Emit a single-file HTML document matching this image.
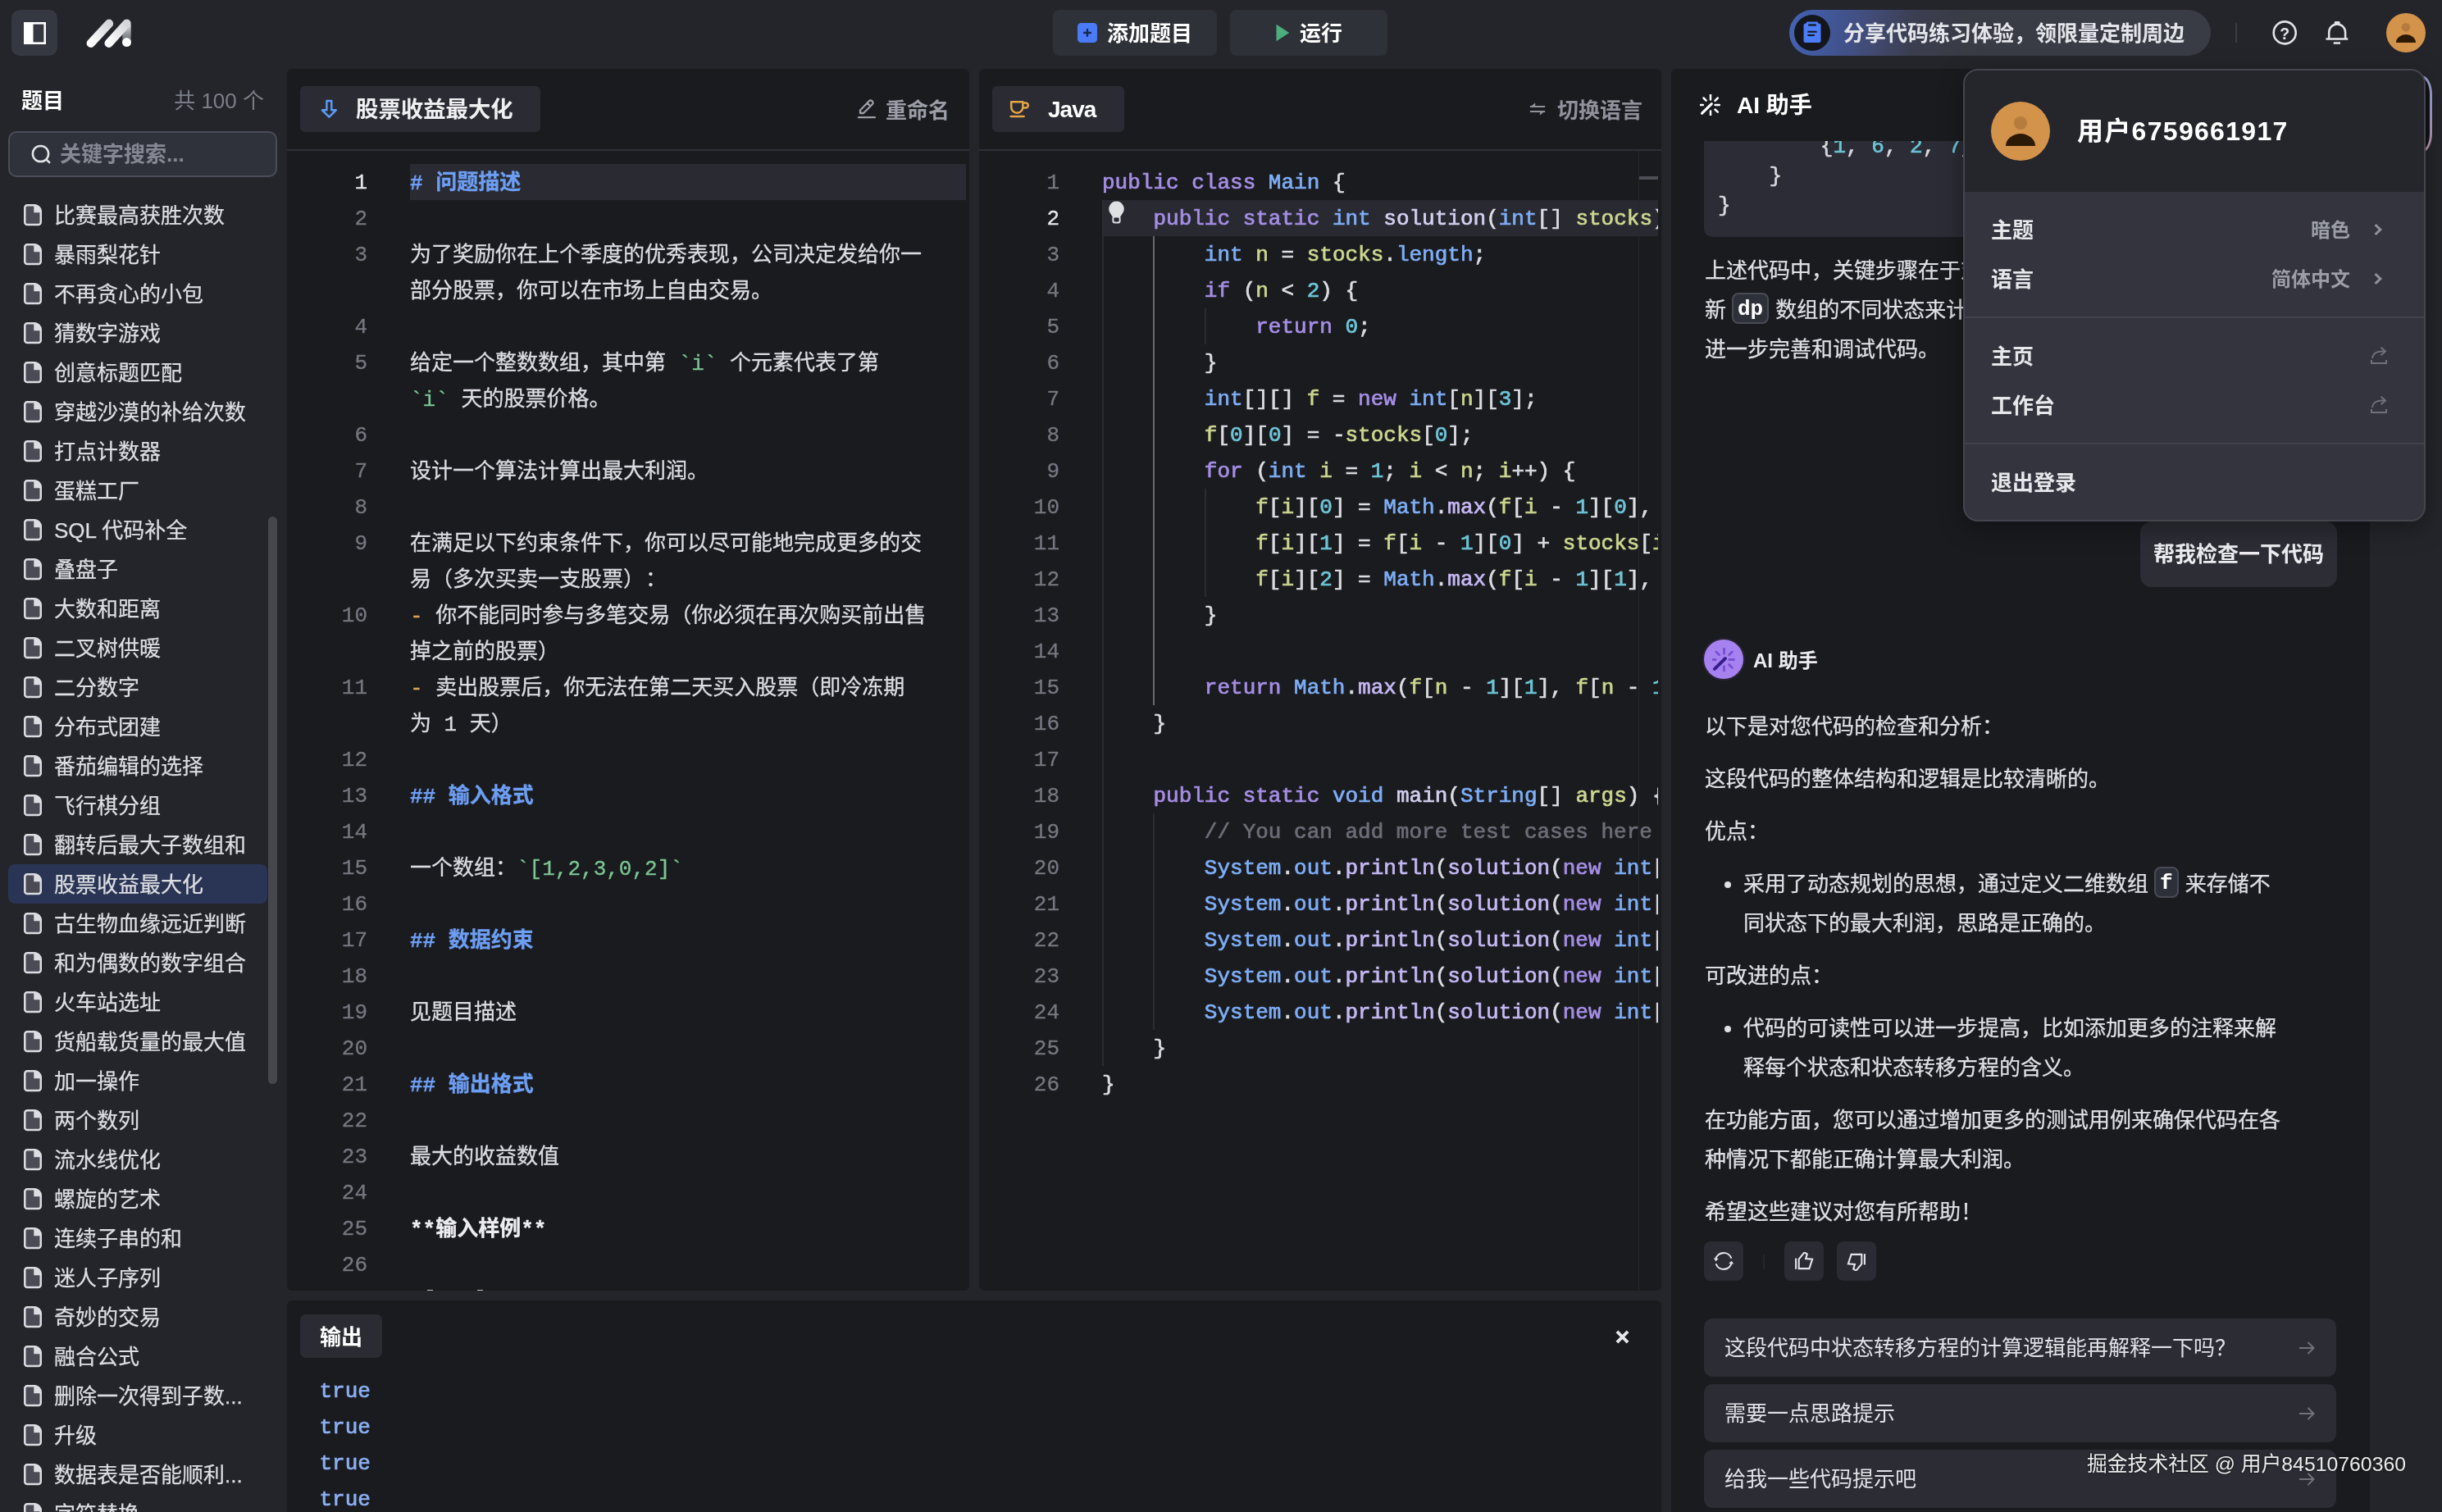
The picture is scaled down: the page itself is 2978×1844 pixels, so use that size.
<!DOCTYPE html>
<html lang="zh-CN"><head><meta charset="utf-8"><title>MarsCode</title>
<style>
*{box-sizing:border-box;margin:0;padding:0}
#app{position:absolute;left:0;top:0;width:2978px;height:1844px;overflow:hidden;will-change:transform}
html,body{width:2978px;height:1844px;overflow:hidden;background:#24252a}
body{position:relative;font-family:"Liberation Sans","Noto Sans CJK SC",sans-serif;font-size:26px;color:#e3e4e9;-webkit-font-smoothing:antialiased}
.abs{position:absolute}
.mono{font-family:"Liberation Mono","Noto Sans CJK SC",monospace}
.b{font-weight:700}
.panel{position:absolute;background:#1a1b1f;border-radius:6px;overflow:hidden}
.tbtn{position:absolute;top:12px;height:56px;border-radius:8px;background:#2f3139}
.tab{position:absolute;top:21px;height:56px;border-radius:6px;background:#2b2c33}
.hline{position:absolute;left:0;right:0;top:98px;height:2px;background:#2f3038}
/* sidebar */
.li{position:absolute;left:10px;width:316px;height:48px;border-radius:8px}
.li svg{position:absolute;left:19px;top:11px}
.li span{position:absolute;left:56px;top:1px;line-height:48px;white-space:nowrap;color:#dddee3;font-size:26px;-webkit-text-stroke:0.25px}
.li.sel{background:#2a3555}
/* editor */
.ln{position:absolute;width:60px;text-align:right;height:44px;line-height:46px;-webkit-text-stroke:0.3px;color:#767881;font-size:26px;font-family:"Liberation Mono",monospace}
.ln.act{color:#e8e8ec}
.row{position:absolute;height:44px;line-height:46px;-webkit-text-stroke:0.3px;white-space:pre;font-size:26px;color:#dcdde2;font-family:"Liberation Mono","Noto Sans CJK SC",monospace}
.h{color:#6d9ef3;font-weight:700}
.g{color:#7cc792}
.o{color:#d9a45c}
.k{color:#a68ee6}
.t{color:#7eaef6}
.v{color:#cdd68f}
.n{color:#6ec6d8}
.f{color:#c6b8f4}
.fd{color:#d4cff0}
.p{color:#dcdde2}
.c{color:#6b6d77}
.row.p{-webkit-text-stroke:0.7px}
.guide{position:absolute;width:2px;background:#2b2c33}
.guide.a{background:#67686e}
/* ai */
.aip{position:absolute;left:41px;width:740px;line-height:48px;font-size:26px;color:#dfe0e5;white-space:nowrap;-webkit-text-stroke:0.25px}
.ic{font-family:"Liberation Mono",monospace;-webkit-text-stroke:0;display:inline-block;height:38px;line-height:37px;padding:0 5px;border:2px solid #484a55;border-radius:8px;background:#2e3039;color:#fff;font-weight:700;vertical-align:middle;position:relative;top:-4px;margin:0 8px 0 7px}
.sug{position:absolute;left:40px;width:771px;height:71px;border-radius:10px;background:#2b2c34;line-height:73px;padding-left:25px;font-size:26px;color:#e1e2e7}
.sug svg{position:absolute;right:26px;top:27px}
.abtn{position:absolute;top:1430px;width:48px;height:48px;border-radius:8px;background:#2a2b33}
/* menu */
.mi{position:absolute;left:32px;font-weight:700;font-size:26px;color:#e6e7eb;line-height:40px;white-space:nowrap}
.mv{position:absolute;right:90px;font-weight:700;font-size:24px;color:#9b9da7;line-height:40px;white-space:nowrap}
</style></head>
<body>
<div id="app">

<!-- ===== top bar ===== -->
<div class="abs" style="left:14px;top:12px;width:56px;height:56px;border-radius:10px;background:#363841">
  <svg class="abs" style="left:14.5px;top:14.5px" width="27" height="27" viewBox="0 0 27 27"><rect x="1.3" y="1.3" width="24.4" height="24.4" fill="none" stroke="#fff" stroke-width="2.6"/><rect x="0.2" y="0.2" width="11.3" height="26.6" fill="#fff"/></svg>
</div>
<svg class="abs" style="left:100px;top:18px" width="66" height="44" viewBox="100 18 66 44">
  <defs><linearGradient id="lg1" x1="0" y1="0" x2="0" y2="1"><stop offset="0" stop-color="#d9dade"/><stop offset="0.35" stop-color="#a9abb1"/><stop offset="1" stop-color="#5d5f66"/></linearGradient>
  <linearGradient id="lg2" x1="1" y1="0" x2="0" y2="1"><stop offset="0" stop-color="#d4d5d9"/><stop offset="1" stop-color="#ffffff"/></linearGradient></defs>
  <path d="M149.3 34 L159.7 30 L159.7 51.5 L149.3 51.5 Z" fill="url(#lg1)"/>
  <line x1="110.8" y1="52.7" x2="133" y2="28.7" stroke="url(#lg2)" stroke-width="10.4" stroke-linecap="round"/>
  <line x1="132.7" y1="52.7" x2="154.5" y2="28.7" stroke="url(#lg2)" stroke-width="10.4" stroke-linecap="round"/>
  <circle cx="154.5" cy="51.6" r="5.5" fill="#fff"/>
</svg>

<div class="tbtn" style="left:1284px;width:200px">
  <svg class="abs" style="left:30px;top:16px" width="24" height="24" viewBox="0 0 24 24"><rect width="24" height="24" rx="4.5" fill="#4a7bf6"/><path d="M12 8v8M8 12h8" stroke="#1a2850" stroke-width="2.3" stroke-linecap="round"/></svg>
  <span class="abs b" style="left:66px;top:1px;line-height:56px;color:#fff;white-space:nowrap">添加题目</span>
</div>
<div class="tbtn" style="left:1500px;width:192px">
  <svg class="abs" style="left:56px;top:17px" width="17" height="22" viewBox="0 0 17 22"><path d="M0.5 0.8 L16.2 11 L0.5 21.2 Z" fill="#4bae7f"/></svg>
  <span class="abs b" style="left:85px;top:1px;line-height:56px;color:#fff;white-space:nowrap">运行</span>
</div>

<div class="abs" style="left:2182px;top:12px;width:514px;height:56px;border-radius:28px;background:linear-gradient(100deg,#4363b4 0%,#41589c 9%,#424c78 19%,#3b3e4f 30%,#393b45 42%,#393b45 100%)">
  <div class="abs" style="left:6px;top:6px;width:44px;height:44px;border-radius:22px;background:#15161b"></div>
  <svg class="abs" style="left:17px;top:14px" width="22" height="27" viewBox="0 0 22 27"><path d="M3 2.6h0.6l1-2h12.800l1 2H19a2.500 2.500 0 0 1 2.500 2.500V23.500a2.500 2.500 0 0 1-2.500 2.500H3a2.500 2.500 0 0 1-2.500-2.500V5.100A2.500 2.500 0 0 1 3 2.600z" fill="#4b7df8"/><path d="M6.200 4.500h9.600" stroke="#15161b" stroke-width="2.200"/><path d="M5.400 12.700h11.200M5.400 17.100h8.400" stroke="#15161b" stroke-width="2"/></svg>
  <span class="abs" style="left:66px;top:1px;line-height:56px;color:#e4e5ea;white-space:nowrap;font-weight:700">分享代码练习体验，领限量定制周边</span>
</div>
<div class="abs" style="left:2726px;top:28px;width:2px;height:24px;background:#3a3b44"></div>
<svg class="abs" style="left:2770px;top:24px" width="32" height="32" viewBox="0 0 32 32"><circle cx="16.2" cy="15.9" r="13.5" fill="none" stroke="#e2e3e8" stroke-width="2.6"/><text x="16.2" y="23.6" text-anchor="middle" font-family="Liberation Sans, sans-serif" font-weight="700" font-size="19.5" fill="#e2e3e8">?</text></svg>
<svg class="abs" style="left:2834px;top:22px" width="32" height="36" viewBox="0 0 32 36"><path d="M6.200 25.600V17.500a9.950 9.950 0 0 1 19.900 0V25.600" fill="none" stroke="#e2e3e8" stroke-width="2.500"/><path d="M2.500 25.600H29.300M11.700 30.400H20" stroke="#e2e3e8" stroke-width="2.500"/><rect x="12.600" y="3.900" width="7.100" height="3.600" rx="1.500" fill="#e2e3e8"/></svg>
<svg class="abs" style="left:2910px;top:16px" width="48" height="48" viewBox="0 0 72 72"><circle cx="36" cy="36" r="36" fill="#d3934b"/><circle cx="36" cy="26" r="8" fill="#b67c3e"/><path d="M18 54 a18 15 0 0 1 36 0 Z" fill="#2c1a06"/></svg>
<!-- ===== sidebar ===== -->
<div class="abs b" style="left:26px;top:103px;line-height:40px;color:#fff;font-size:26px">题目</div>
<div class="abs" style="right:2656px;top:103px;line-height:40px;color:#7b7e89;font-size:26px;white-space:nowrap">共 100 个</div>
<div class="abs" style="left:10px;top:160px;width:328px;height:56px;border:2px solid #4a4d58;border-radius:10px;background:#30323b"><svg class="abs" style="left:25px;top:13px" width="28" height="28" viewBox="0 0 28 28"><circle cx="12.5" cy="12.5" r="9.6" fill="none" stroke="#e4e5ea" stroke-width="2.5"/><path d="M19.6 19.6l3.6 3.6" stroke="#e4e5ea" stroke-width="2.5" stroke-linecap="round"/></svg><span class="abs" style="left:61px;top:0;line-height:52px;color:#858893;font-weight:700;white-space:nowrap">关键字搜索...</span></div>
<div class="li" style="top:238px"><svg width="22" height="27" viewBox="0 0 22 27"><path d="M4.250 1.250H13A7.750 7.750 0 0 1 20.750 9V22a3 3 0 0 1-3 3H4.250a3 3 0 0 1-3-3V4.250a3 3 0 0 1 3-3z" fill="#4a4b55" stroke="#dcdde2" stroke-width="2.500"/><path d="M12.300 0.600H13A8.400 8.400 0 0 1 21.400 9V10.300H12.300z" fill="#dcdde2"/></svg><span>比赛最高获胜次数</span></div>
<div class="li" style="top:286px"><svg width="22" height="27" viewBox="0 0 22 27"><path d="M4.250 1.250H13A7.750 7.750 0 0 1 20.750 9V22a3 3 0 0 1-3 3H4.250a3 3 0 0 1-3-3V4.250a3 3 0 0 1 3-3z" fill="#4a4b55" stroke="#dcdde2" stroke-width="2.500"/><path d="M12.300 0.600H13A8.400 8.400 0 0 1 21.400 9V10.300H12.300z" fill="#dcdde2"/></svg><span>暴雨梨花针</span></div>
<div class="li" style="top:334px"><svg width="22" height="27" viewBox="0 0 22 27"><path d="M4.250 1.250H13A7.750 7.750 0 0 1 20.750 9V22a3 3 0 0 1-3 3H4.250a3 3 0 0 1-3-3V4.250a3 3 0 0 1 3-3z" fill="#4a4b55" stroke="#dcdde2" stroke-width="2.500"/><path d="M12.300 0.600H13A8.400 8.400 0 0 1 21.400 9V10.300H12.300z" fill="#dcdde2"/></svg><span>不再贪心的小包</span></div>
<div class="li" style="top:382px"><svg width="22" height="27" viewBox="0 0 22 27"><path d="M4.250 1.250H13A7.750 7.750 0 0 1 20.750 9V22a3 3 0 0 1-3 3H4.250a3 3 0 0 1-3-3V4.250a3 3 0 0 1 3-3z" fill="#4a4b55" stroke="#dcdde2" stroke-width="2.500"/><path d="M12.300 0.600H13A8.400 8.400 0 0 1 21.400 9V10.300H12.300z" fill="#dcdde2"/></svg><span>猜数字游戏</span></div>
<div class="li" style="top:430px"><svg width="22" height="27" viewBox="0 0 22 27"><path d="M4.250 1.250H13A7.750 7.750 0 0 1 20.750 9V22a3 3 0 0 1-3 3H4.250a3 3 0 0 1-3-3V4.250a3 3 0 0 1 3-3z" fill="#4a4b55" stroke="#dcdde2" stroke-width="2.500"/><path d="M12.300 0.600H13A8.400 8.400 0 0 1 21.400 9V10.300H12.300z" fill="#dcdde2"/></svg><span>创意标题匹配</span></div>
<div class="li" style="top:478px"><svg width="22" height="27" viewBox="0 0 22 27"><path d="M4.250 1.250H13A7.750 7.750 0 0 1 20.750 9V22a3 3 0 0 1-3 3H4.250a3 3 0 0 1-3-3V4.250a3 3 0 0 1 3-3z" fill="#4a4b55" stroke="#dcdde2" stroke-width="2.500"/><path d="M12.300 0.600H13A8.400 8.400 0 0 1 21.400 9V10.300H12.300z" fill="#dcdde2"/></svg><span>穿越沙漠的补给次数</span></div>
<div class="li" style="top:526px"><svg width="22" height="27" viewBox="0 0 22 27"><path d="M4.250 1.250H13A7.750 7.750 0 0 1 20.750 9V22a3 3 0 0 1-3 3H4.250a3 3 0 0 1-3-3V4.250a3 3 0 0 1 3-3z" fill="#4a4b55" stroke="#dcdde2" stroke-width="2.500"/><path d="M12.300 0.600H13A8.400 8.400 0 0 1 21.400 9V10.300H12.300z" fill="#dcdde2"/></svg><span>打点计数器</span></div>
<div class="li" style="top:574px"><svg width="22" height="27" viewBox="0 0 22 27"><path d="M4.250 1.250H13A7.750 7.750 0 0 1 20.750 9V22a3 3 0 0 1-3 3H4.250a3 3 0 0 1-3-3V4.250a3 3 0 0 1 3-3z" fill="#4a4b55" stroke="#dcdde2" stroke-width="2.500"/><path d="M12.300 0.600H13A8.400 8.400 0 0 1 21.400 9V10.300H12.300z" fill="#dcdde2"/></svg><span>蛋糕工厂</span></div>
<div class="li" style="top:622px"><svg width="22" height="27" viewBox="0 0 22 27"><path d="M4.250 1.250H13A7.750 7.750 0 0 1 20.750 9V22a3 3 0 0 1-3 3H4.250a3 3 0 0 1-3-3V4.250a3 3 0 0 1 3-3z" fill="#4a4b55" stroke="#dcdde2" stroke-width="2.500"/><path d="M12.300 0.600H13A8.400 8.400 0 0 1 21.400 9V10.300H12.300z" fill="#dcdde2"/></svg><span>SQL 代码补全</span></div>
<div class="li" style="top:670px"><svg width="22" height="27" viewBox="0 0 22 27"><path d="M4.250 1.250H13A7.750 7.750 0 0 1 20.750 9V22a3 3 0 0 1-3 3H4.250a3 3 0 0 1-3-3V4.250a3 3 0 0 1 3-3z" fill="#4a4b55" stroke="#dcdde2" stroke-width="2.500"/><path d="M12.300 0.600H13A8.400 8.400 0 0 1 21.400 9V10.300H12.300z" fill="#dcdde2"/></svg><span>叠盘子</span></div>
<div class="li" style="top:718px"><svg width="22" height="27" viewBox="0 0 22 27"><path d="M4.250 1.250H13A7.750 7.750 0 0 1 20.750 9V22a3 3 0 0 1-3 3H4.250a3 3 0 0 1-3-3V4.250a3 3 0 0 1 3-3z" fill="#4a4b55" stroke="#dcdde2" stroke-width="2.500"/><path d="M12.300 0.600H13A8.400 8.400 0 0 1 21.400 9V10.300H12.300z" fill="#dcdde2"/></svg><span>大数和距离</span></div>
<div class="li" style="top:766px"><svg width="22" height="27" viewBox="0 0 22 27"><path d="M4.250 1.250H13A7.750 7.750 0 0 1 20.750 9V22a3 3 0 0 1-3 3H4.250a3 3 0 0 1-3-3V4.250a3 3 0 0 1 3-3z" fill="#4a4b55" stroke="#dcdde2" stroke-width="2.500"/><path d="M12.300 0.600H13A8.400 8.400 0 0 1 21.400 9V10.300H12.300z" fill="#dcdde2"/></svg><span>二叉树供暖</span></div>
<div class="li" style="top:814px"><svg width="22" height="27" viewBox="0 0 22 27"><path d="M4.250 1.250H13A7.750 7.750 0 0 1 20.750 9V22a3 3 0 0 1-3 3H4.250a3 3 0 0 1-3-3V4.250a3 3 0 0 1 3-3z" fill="#4a4b55" stroke="#dcdde2" stroke-width="2.500"/><path d="M12.300 0.600H13A8.400 8.400 0 0 1 21.400 9V10.300H12.300z" fill="#dcdde2"/></svg><span>二分数字</span></div>
<div class="li" style="top:862px"><svg width="22" height="27" viewBox="0 0 22 27"><path d="M4.250 1.250H13A7.750 7.750 0 0 1 20.750 9V22a3 3 0 0 1-3 3H4.250a3 3 0 0 1-3-3V4.250a3 3 0 0 1 3-3z" fill="#4a4b55" stroke="#dcdde2" stroke-width="2.500"/><path d="M12.300 0.600H13A8.400 8.400 0 0 1 21.400 9V10.300H12.300z" fill="#dcdde2"/></svg><span>分布式团建</span></div>
<div class="li" style="top:910px"><svg width="22" height="27" viewBox="0 0 22 27"><path d="M4.250 1.250H13A7.750 7.750 0 0 1 20.750 9V22a3 3 0 0 1-3 3H4.250a3 3 0 0 1-3-3V4.250a3 3 0 0 1 3-3z" fill="#4a4b55" stroke="#dcdde2" stroke-width="2.500"/><path d="M12.300 0.600H13A8.400 8.400 0 0 1 21.400 9V10.300H12.300z" fill="#dcdde2"/></svg><span>番茄编辑的选择</span></div>
<div class="li" style="top:958px"><svg width="22" height="27" viewBox="0 0 22 27"><path d="M4.250 1.250H13A7.750 7.750 0 0 1 20.750 9V22a3 3 0 0 1-3 3H4.250a3 3 0 0 1-3-3V4.250a3 3 0 0 1 3-3z" fill="#4a4b55" stroke="#dcdde2" stroke-width="2.500"/><path d="M12.300 0.600H13A8.400 8.400 0 0 1 21.400 9V10.300H12.300z" fill="#dcdde2"/></svg><span>飞行棋分组</span></div>
<div class="li" style="top:1006px"><svg width="22" height="27" viewBox="0 0 22 27"><path d="M4.250 1.250H13A7.750 7.750 0 0 1 20.750 9V22a3 3 0 0 1-3 3H4.250a3 3 0 0 1-3-3V4.250a3 3 0 0 1 3-3z" fill="#4a4b55" stroke="#dcdde2" stroke-width="2.500"/><path d="M12.300 0.600H13A8.400 8.400 0 0 1 21.400 9V10.300H12.300z" fill="#dcdde2"/></svg><span>翻转后最大子数组和</span></div>
<div class="li sel" style="top:1054px"><svg width="22" height="27" viewBox="0 0 22 27"><path d="M4.250 1.250H13A7.750 7.750 0 0 1 20.750 9V22a3 3 0 0 1-3 3H4.250a3 3 0 0 1-3-3V4.250a3 3 0 0 1 3-3z" fill="#4a4b55" stroke="#dcdde2" stroke-width="2.500"/><path d="M12.300 0.600H13A8.400 8.400 0 0 1 21.400 9V10.300H12.300z" fill="#dcdde2"/></svg><span>股票收益最大化</span></div>
<div class="li" style="top:1102px"><svg width="22" height="27" viewBox="0 0 22 27"><path d="M4.250 1.250H13A7.750 7.750 0 0 1 20.750 9V22a3 3 0 0 1-3 3H4.250a3 3 0 0 1-3-3V4.250a3 3 0 0 1 3-3z" fill="#4a4b55" stroke="#dcdde2" stroke-width="2.500"/><path d="M12.300 0.600H13A8.400 8.400 0 0 1 21.400 9V10.300H12.300z" fill="#dcdde2"/></svg><span>古生物血缘远近判断</span></div>
<div class="li" style="top:1150px"><svg width="22" height="27" viewBox="0 0 22 27"><path d="M4.250 1.250H13A7.750 7.750 0 0 1 20.750 9V22a3 3 0 0 1-3 3H4.250a3 3 0 0 1-3-3V4.250a3 3 0 0 1 3-3z" fill="#4a4b55" stroke="#dcdde2" stroke-width="2.500"/><path d="M12.300 0.600H13A8.400 8.400 0 0 1 21.400 9V10.300H12.300z" fill="#dcdde2"/></svg><span>和为偶数的数字组合</span></div>
<div class="li" style="top:1198px"><svg width="22" height="27" viewBox="0 0 22 27"><path d="M4.250 1.250H13A7.750 7.750 0 0 1 20.750 9V22a3 3 0 0 1-3 3H4.250a3 3 0 0 1-3-3V4.250a3 3 0 0 1 3-3z" fill="#4a4b55" stroke="#dcdde2" stroke-width="2.500"/><path d="M12.300 0.600H13A8.400 8.400 0 0 1 21.400 9V10.300H12.300z" fill="#dcdde2"/></svg><span>火车站选址</span></div>
<div class="li" style="top:1246px"><svg width="22" height="27" viewBox="0 0 22 27"><path d="M4.250 1.250H13A7.750 7.750 0 0 1 20.750 9V22a3 3 0 0 1-3 3H4.250a3 3 0 0 1-3-3V4.250a3 3 0 0 1 3-3z" fill="#4a4b55" stroke="#dcdde2" stroke-width="2.500"/><path d="M12.300 0.600H13A8.400 8.400 0 0 1 21.400 9V10.300H12.300z" fill="#dcdde2"/></svg><span>货船载货量的最大值</span></div>
<div class="li" style="top:1294px"><svg width="22" height="27" viewBox="0 0 22 27"><path d="M4.250 1.250H13A7.750 7.750 0 0 1 20.750 9V22a3 3 0 0 1-3 3H4.250a3 3 0 0 1-3-3V4.250a3 3 0 0 1 3-3z" fill="#4a4b55" stroke="#dcdde2" stroke-width="2.500"/><path d="M12.300 0.600H13A8.400 8.400 0 0 1 21.400 9V10.300H12.300z" fill="#dcdde2"/></svg><span>加一操作</span></div>
<div class="li" style="top:1342px"><svg width="22" height="27" viewBox="0 0 22 27"><path d="M4.250 1.250H13A7.750 7.750 0 0 1 20.750 9V22a3 3 0 0 1-3 3H4.250a3 3 0 0 1-3-3V4.250a3 3 0 0 1 3-3z" fill="#4a4b55" stroke="#dcdde2" stroke-width="2.500"/><path d="M12.300 0.600H13A8.400 8.400 0 0 1 21.400 9V10.300H12.300z" fill="#dcdde2"/></svg><span>两个数列</span></div>
<div class="li" style="top:1390px"><svg width="22" height="27" viewBox="0 0 22 27"><path d="M4.250 1.250H13A7.750 7.750 0 0 1 20.750 9V22a3 3 0 0 1-3 3H4.250a3 3 0 0 1-3-3V4.250a3 3 0 0 1 3-3z" fill="#4a4b55" stroke="#dcdde2" stroke-width="2.500"/><path d="M12.300 0.600H13A8.400 8.400 0 0 1 21.400 9V10.300H12.300z" fill="#dcdde2"/></svg><span>流水线优化</span></div>
<div class="li" style="top:1438px"><svg width="22" height="27" viewBox="0 0 22 27"><path d="M4.250 1.250H13A7.750 7.750 0 0 1 20.750 9V22a3 3 0 0 1-3 3H4.250a3 3 0 0 1-3-3V4.250a3 3 0 0 1 3-3z" fill="#4a4b55" stroke="#dcdde2" stroke-width="2.500"/><path d="M12.300 0.600H13A8.400 8.400 0 0 1 21.400 9V10.300H12.300z" fill="#dcdde2"/></svg><span>螺旋的艺术</span></div>
<div class="li" style="top:1486px"><svg width="22" height="27" viewBox="0 0 22 27"><path d="M4.250 1.250H13A7.750 7.750 0 0 1 20.750 9V22a3 3 0 0 1-3 3H4.250a3 3 0 0 1-3-3V4.250a3 3 0 0 1 3-3z" fill="#4a4b55" stroke="#dcdde2" stroke-width="2.500"/><path d="M12.300 0.600H13A8.400 8.400 0 0 1 21.400 9V10.300H12.300z" fill="#dcdde2"/></svg><span>连续子串的和</span></div>
<div class="li" style="top:1534px"><svg width="22" height="27" viewBox="0 0 22 27"><path d="M4.250 1.250H13A7.750 7.750 0 0 1 20.750 9V22a3 3 0 0 1-3 3H4.250a3 3 0 0 1-3-3V4.250a3 3 0 0 1 3-3z" fill="#4a4b55" stroke="#dcdde2" stroke-width="2.500"/><path d="M12.300 0.600H13A8.400 8.400 0 0 1 21.400 9V10.300H12.300z" fill="#dcdde2"/></svg><span>迷人子序列</span></div>
<div class="li" style="top:1582px"><svg width="22" height="27" viewBox="0 0 22 27"><path d="M4.250 1.250H13A7.750 7.750 0 0 1 20.750 9V22a3 3 0 0 1-3 3H4.250a3 3 0 0 1-3-3V4.250a3 3 0 0 1 3-3z" fill="#4a4b55" stroke="#dcdde2" stroke-width="2.500"/><path d="M12.300 0.600H13A8.400 8.400 0 0 1 21.400 9V10.300H12.300z" fill="#dcdde2"/></svg><span>奇妙的交易</span></div>
<div class="li" style="top:1630px"><svg width="22" height="27" viewBox="0 0 22 27"><path d="M4.250 1.250H13A7.750 7.750 0 0 1 20.750 9V22a3 3 0 0 1-3 3H4.250a3 3 0 0 1-3-3V4.250a3 3 0 0 1 3-3z" fill="#4a4b55" stroke="#dcdde2" stroke-width="2.500"/><path d="M12.300 0.600H13A8.400 8.400 0 0 1 21.400 9V10.300H12.300z" fill="#dcdde2"/></svg><span>融合公式</span></div>
<div class="li" style="top:1678px"><svg width="22" height="27" viewBox="0 0 22 27"><path d="M4.250 1.250H13A7.750 7.750 0 0 1 20.750 9V22a3 3 0 0 1-3 3H4.250a3 3 0 0 1-3-3V4.250a3 3 0 0 1 3-3z" fill="#4a4b55" stroke="#dcdde2" stroke-width="2.500"/><path d="M12.300 0.600H13A8.400 8.400 0 0 1 21.400 9V10.300H12.300z" fill="#dcdde2"/></svg><span>删除一次得到子数...</span></div>
<div class="li" style="top:1726px"><svg width="22" height="27" viewBox="0 0 22 27"><path d="M4.250 1.250H13A7.750 7.750 0 0 1 20.750 9V22a3 3 0 0 1-3 3H4.250a3 3 0 0 1-3-3V4.250a3 3 0 0 1 3-3z" fill="#4a4b55" stroke="#dcdde2" stroke-width="2.500"/><path d="M12.300 0.600H13A8.400 8.400 0 0 1 21.400 9V10.300H12.300z" fill="#dcdde2"/></svg><span>升级</span></div>
<div class="li" style="top:1774px"><svg width="22" height="27" viewBox="0 0 22 27"><path d="M4.250 1.250H13A7.750 7.750 0 0 1 20.750 9V22a3 3 0 0 1-3 3H4.250a3 3 0 0 1-3-3V4.250a3 3 0 0 1 3-3z" fill="#4a4b55" stroke="#dcdde2" stroke-width="2.500"/><path d="M12.300 0.600H13A8.400 8.400 0 0 1 21.400 9V10.300H12.300z" fill="#dcdde2"/></svg><span>数据表是否能顺利...</span></div>
<div class="li" style="top:1822px"><svg width="22" height="27" viewBox="0 0 22 27"><path d="M4.250 1.250H13A7.750 7.750 0 0 1 20.750 9V22a3 3 0 0 1-3 3H4.250a3 3 0 0 1-3-3V4.250a3 3 0 0 1 3-3z" fill="#4a4b55" stroke="#dcdde2" stroke-width="2.500"/><path d="M12.300 0.600H13A8.400 8.400 0 0 1 21.400 9V10.300H12.300z" fill="#dcdde2"/></svg><span>字符替换</span></div>
<div class="abs" style="left:327px;top:630px;width:11px;height:692px;border-radius:5.5px;background:#46474d"></div>
<!-- ===== problem panel ===== -->
<div class="panel" style="left:350px;top:84px;width:832px;height:1490px">
<div class="tab" style="left:16px;width:293px"><svg class="abs" style="left:24px;top:16px" width="24" height="25" viewBox="0 0 24 25"><path d="M8.4 2H14.300V13.300H19.800L11.350 21.700 2.900 13.300H8.400z" fill="none" stroke="#5b9cf8" stroke-width="2.4" stroke-linejoin="round"/></svg><span class="abs b" style="left:68px;top:1px;line-height:56px;font-size:27.4px;color:#f0f0f3;white-space:nowrap">股票收益最大化</span></div>
<svg class="abs" style="left:695px;top:37px" width="24" height="24" viewBox="0 0 24 24"><path d="M4 16.5 L14.8 5.2 a2.6 2.6 0 0 1 3.7 0 l0.3 0.3 a2.6 2.6 0 0 1 0 3.7 L8 20 H4 Z M12.6 7.6 l3.8 3.8" fill="none" stroke="#9b9da7" stroke-width="2.3" stroke-linejoin="round" transform="translate(0,-3)"/><path d="M2 22.2h20" stroke="#9b9da7" stroke-width="2.3" stroke-linecap="round"/></svg>
<span class="abs b" style="left:730px;top:31px;line-height:40px;color:#9b9da7;white-space:nowrap">重命名</span>
<div class="hline"></div>
<div class="abs" style="left:150px;top:116px;width:678px;height:44px;background:#2a2b32"></div>
<div class="ln act" style="left:38px;top:116px">1</div>
<div class="row" style="left:150px;top:117px"><span class="h"># 问题描述</span></div>
<div class="ln" style="left:38px;top:160px">2</div>
<div class="ln" style="left:38px;top:204px">3</div>
<div class="row" style="left:150px;top:205px">为了奖励你在上个季度的优秀表现，公司决定发给你一</div>
<div class="row" style="left:150px;top:249px">部分股票，你可以在市场上自由交易。</div>
<div class="ln" style="left:38px;top:292px">4</div>
<div class="ln" style="left:38px;top:336px">5</div>
<div class="row" style="left:150px;top:337px">给定一个整数数组，其中第 <span class="g">`i`</span> 个元素代表了第</div>
<div class="row" style="left:150px;top:381px"><span class="g">`i`</span> 天的股票价格。</div>
<div class="ln" style="left:38px;top:424px">6</div>
<div class="ln" style="left:38px;top:468px">7</div>
<div class="row" style="left:150px;top:469px">设计一个算法计算出最大利润。</div>
<div class="ln" style="left:38px;top:512px">8</div>
<div class="ln" style="left:38px;top:556px">9</div>
<div class="row" style="left:150px;top:557px">在满足以下约束条件下，你可以尽可能地完成更多的交</div>
<div class="row" style="left:150px;top:601px">易（多次买卖一支股票）<span style="position:relative;left:14px">：</span></div>
<div class="ln" style="left:38px;top:644px">10</div>
<div class="row" style="left:150px;top:645px"><span class="o">-</span> 你不能同时参与多笔交易（你必须在再次购买前出售</div>
<div class="row" style="left:150px;top:689px">掉之前的股票）</div>
<div class="ln" style="left:38px;top:732px">11</div>
<div class="row" style="left:150px;top:733px"><span class="o">-</span> 卖出股票后，你无法在第二天买入股票（即冷冻期</div>
<div class="row" style="left:150px;top:777px">为 1 天）</div>
<div class="ln" style="left:38px;top:820px">12</div>
<div class="ln" style="left:38px;top:864px">13</div>
<div class="row" style="left:150px;top:865px"><span class="h">## 输入格式</span></div>
<div class="ln" style="left:38px;top:908px">14</div>
<div class="ln" style="left:38px;top:952px">15</div>
<div class="row" style="left:150px;top:953px">一个数组：<span class="g">`[1,2,3,0,2]`</span></div>
<div class="ln" style="left:38px;top:996px">16</div>
<div class="ln" style="left:38px;top:1040px">17</div>
<div class="row" style="left:150px;top:1041px"><span class="h">## 数据约束</span></div>
<div class="ln" style="left:38px;top:1084px">18</div>
<div class="ln" style="left:38px;top:1128px">19</div>
<div class="row" style="left:150px;top:1129px">见题目描述</div>
<div class="ln" style="left:38px;top:1172px">20</div>
<div class="ln" style="left:38px;top:1216px">21</div>
<div class="row" style="left:150px;top:1217px"><span class="h">## 输出格式</span></div>
<div class="ln" style="left:38px;top:1260px">22</div>
<div class="ln" style="left:38px;top:1304px">23</div>
<div class="row" style="left:150px;top:1305px">最大的收益数值</div>
<div class="ln" style="left:38px;top:1348px">24</div>
<div class="ln" style="left:38px;top:1392px">25</div>
<div class="row" style="left:150px;top:1393px"><span class="b" style="color:#eeeef2">**输入样例**</span></div>
<div class="ln" style="left:38px;top:1436px">26</div>
<div class="ln" style="left:38px;top:1480px">27</div>
<div class="row" style="left:150px;top:1481px"><span class="g">`[1,2,3,0,2]`</span></div>
<div class="abs" style="left:171px;top:1489px;width:7px;height:1px;background:#b9c4c0"></div><div class="abs" style="left:232px;top:1489px;width:7px;height:1px;background:#b9c4c0"></div>
</div>
<!-- ===== java panel ===== -->
<div class="panel" style="left:1194px;top:84px;width:832px;height:1490px">
<div class="tab" style="left:16px;width:161px"><svg class="abs" style="left:21px;top:17px" width="26" height="22" viewBox="0 0 26 22"><path d="M2.2 2.2h14.2v6.4a7.1 7.1 0 0 1-14.2 0z" fill="none" stroke="#e5a445" stroke-width="2.5" stroke-linejoin="round"/><path d="M16.6 3.4h3.2a3 3 0 0 1 0 6h-3.4" fill="none" stroke="#e5a445" stroke-width="2.5"/><path d="M1.6 20h16" stroke="#e5a445" stroke-width="2.5" stroke-linecap="round"/></svg><span class="abs b" style="left:68px;top:1px;line-height:56px;font-size:28px;letter-spacing:-1px;color:#fff;white-space:nowrap">Java</span></div>
<svg class="abs" style="left:671px;top:40px" width="21" height="18" viewBox="0 0 21 18"><path d="M0.9 6.1h18.3M0.9 12h18.3" stroke="#8f919b" stroke-width="2"/><path d="M0.9 6.8L7.2 1.3v5.5zM19.2 11.3l-6.3 5.300v-5.300z" fill="#8f919b"/></svg>
<span class="abs b" style="left:705px;top:31px;line-height:40px;color:#8f919b;white-space:nowrap">切换语言</span>
<div class="hline"></div>
<div class="abs" style="left:0;top:100px;width:828px;height:1390px;overflow:hidden">
<div class="abs" style="left:150px;top:60px;width:700px;height:44px;background:#292a31"></div>
<div class="guide" style="left:150.0px;top:60px;height:1056px"></div>
<div class="guide a" style="left:212.4px;top:104px;height:572px"></div>
<div class="guide" style="left:212.4px;top:808px;height:264px"></div>
<div class="guide" style="left:274.8px;top:192px;height:44px"></div>
<div class="guide" style="left:274.8px;top:412px;height:132px"></div>
<div class="ln" style="left:38px;top:16px">1</div>
<div class="row p" style="left:150px;top:16px"><span class="k">public</span> <span class="k">class</span> <span class="t">Main</span> {</div>
<div class="ln act" style="left:38px;top:60px">2</div>
<div class="row p" style="left:150px;top:60px">    <span class="k">public</span> <span class="k">static</span> <span class="t">int</span> <span class="fd">solution</span>(<span class="t">int</span>[] <span class="v">stocks</span>) {</div>
<div class="ln" style="left:38px;top:104px">3</div>
<div class="row p" style="left:150px;top:104px">        <span class="t">int</span> <span class="v">n</span> = <span class="v">stocks</span>.<span class="t">length</span>;</div>
<div class="ln" style="left:38px;top:148px">4</div>
<div class="row p" style="left:150px;top:148px">        <span class="k">if</span> (<span class="v">n</span> &lt; <span class="n">2</span>) {</div>
<div class="ln" style="left:38px;top:192px">5</div>
<div class="row p" style="left:150px;top:192px">            <span class="k">return</span> <span class="n">0</span>;</div>
<div class="ln" style="left:38px;top:236px">6</div>
<div class="row p" style="left:150px;top:236px">        }</div>
<div class="ln" style="left:38px;top:280px">7</div>
<div class="row p" style="left:150px;top:280px">        <span class="t">int</span>[][] <span class="v">f</span> = <span class="k">new</span> <span class="t">int</span>[<span class="v">n</span>][<span class="n">3</span>];</div>
<div class="ln" style="left:38px;top:324px">8</div>
<div class="row p" style="left:150px;top:324px">        <span class="v">f</span>[<span class="n">0</span>][<span class="n">0</span>] = -<span class="v">stocks</span>[<span class="n">0</span>];</div>
<div class="ln" style="left:38px;top:368px">9</div>
<div class="row p" style="left:150px;top:368px">        <span class="k">for</span> (<span class="t">int</span> <span class="v">i</span> = <span class="n">1</span>; <span class="v">i</span> &lt; <span class="v">n</span>; <span class="v">i</span>++) {</div>
<div class="ln" style="left:38px;top:412px">10</div>
<div class="row p" style="left:150px;top:412px">            <span class="v">f</span>[<span class="v">i</span>][<span class="n">0</span>] = <span class="t">Math</span>.<span class="f">max</span>(<span class="v">f</span>[<span class="v">i</span> - <span class="n">1</span>][<span class="n">0</span>], <span class="v">f</span>[<span class="v">i</span> - <span class="n">1</span>][<span class="n">2</span>] - <span class="v">stocks</span>[<span class="v">i</span>]);</div>
<div class="ln" style="left:38px;top:456px">11</div>
<div class="row p" style="left:150px;top:456px">            <span class="v">f</span>[<span class="v">i</span>][<span class="n">1</span>] = <span class="v">f</span>[<span class="v">i</span> - <span class="n">1</span>][<span class="n">0</span>] + <span class="v">stocks</span>[<span class="v">i</span>];</div>
<div class="ln" style="left:38px;top:500px">12</div>
<div class="row p" style="left:150px;top:500px">            <span class="v">f</span>[<span class="v">i</span>][<span class="n">2</span>] = <span class="t">Math</span>.<span class="f">max</span>(<span class="v">f</span>[<span class="v">i</span> - <span class="n">1</span>][<span class="n">1</span>], <span class="v">f</span>[<span class="v">i</span> - <span class="n">1</span>][<span class="n">2</span>]);</div>
<div class="ln" style="left:38px;top:544px">13</div>
<div class="row p" style="left:150px;top:544px">        }</div>
<div class="ln" style="left:38px;top:588px">14</div>
<div class="ln" style="left:38px;top:632px">15</div>
<div class="row p" style="left:150px;top:632px">        <span class="k">return</span> <span class="t">Math</span>.<span class="f">max</span>(<span class="v">f</span>[<span class="v">n</span> - <span class="n">1</span>][<span class="n">1</span>], <span class="v">f</span>[<span class="v">n</span> - <span class="n">1</span>][<span class="n">2</span>]);</div>
<div class="ln" style="left:38px;top:676px">16</div>
<div class="row p" style="left:150px;top:676px">    }</div>
<div class="ln" style="left:38px;top:720px">17</div>
<div class="ln" style="left:38px;top:764px">18</div>
<div class="row p" style="left:150px;top:764px">    <span class="k">public</span> <span class="k">static</span> <span class="t">void</span> <span class="fd">main</span>(<span class="t">String</span>[] <span class="v">args</span>) {</div>
<div class="ln" style="left:38px;top:808px">19</div>
<div class="row p" style="left:150px;top:808px">        <span class="c">// You can add more test cases here</span></div>
<div class="ln" style="left:38px;top:852px">20</div>
<div class="row p" style="left:150px;top:852px">        <span class="t">System</span>.<span class="t">out</span>.<span class="f">println</span>(<span class="f">solution</span>(<span class="k">new</span> <span class="t">int</span>[]{<span class="n">1</span>, <span class="n">2</span>, <span class="n">3</span>, <span class="n">0</span>, <span class="n">2</span>}));</div>
<div class="ln" style="left:38px;top:896px">21</div>
<div class="row p" style="left:150px;top:896px">        <span class="t">System</span>.<span class="t">out</span>.<span class="f">println</span>(<span class="f">solution</span>(<span class="k">new</span> <span class="t">int</span>[]{<span class="n">1</span>, <span class="n">2</span>}));</div>
<div class="ln" style="left:38px;top:940px">22</div>
<div class="row p" style="left:150px;top:940px">        <span class="t">System</span>.<span class="t">out</span>.<span class="f">println</span>(<span class="f">solution</span>(<span class="k">new</span> <span class="t">int</span>[]{<span class="n">2</span>, <span class="n">1</span>}));</div>
<div class="ln" style="left:38px;top:984px">23</div>
<div class="row p" style="left:150px;top:984px">        <span class="t">System</span>.<span class="t">out</span>.<span class="f">println</span>(<span class="f">solution</span>(<span class="k">new</span> <span class="t">int</span>[]{<span class="n">1</span>}));</div>
<div class="ln" style="left:38px;top:1028px">24</div>
<div class="row p" style="left:150px;top:1028px">        <span class="t">System</span>.<span class="t">out</span>.<span class="f">println</span>(<span class="f">solution</span>(<span class="k">new</span> <span class="t">int</span>[]{<span class="n">1</span>, <span class="n">6</span>, <span class="n">2</span>, <span class="n">7</span>}));</div>
<div class="ln" style="left:38px;top:1072px">25</div>
<div class="row p" style="left:150px;top:1072px">    }</div>
<div class="ln" style="left:38px;top:1116px">26</div>
<div class="row p" style="left:150px;top:1116px">}</div>
<svg class="abs" style="left:157px;top:61px" width="21" height="28" viewBox="0 0 21 28"><path d="M10.500.600a9.200 9.200 0 0 0-7.200 14.900l3 4.800h8.400l3-4.800A9.200 9.200 0 0 0 10.500.600z" fill="#dfe0e4"/><rect x="6.400" y="19.300" width="8.200" height="7.100" rx="2" fill="none" stroke="#dfe0e4" stroke-width="2"/></svg>
<div class="abs" style="left:804px;top:0;width:1px;height:1390px;background:#25262b"></div>
<div class="abs" style="left:805px;top:31px;width:23px;height:4px;background:#4d4f56"></div>
</div>
</div>
<!-- ===== output panel ===== -->
<div class="panel" style="left:350px;top:1586px;width:1676px;height:300px">
<div class="abs b" style="left:16px;top:17px;width:100px;height:53px;border-radius:7px;background:#2b2c33;line-height:55px;padding-top:1px;text-align:center;color:#fff;font-size:26px;overflow:hidden">输出</div>
<svg class="abs" style="left:1620px;top:36px" width="17" height="17" viewBox="0 0 17 17"><path d="M1.900 1.900l13.200 13.200M15.100 1.900L1.900 15.100" stroke="#e6e7eb" stroke-width="3.800"/></svg>
<div class="row p" style="left:39.500px;top:88px;color:#8bb0f4">true</div>
<div class="row p" style="left:39.500px;top:132px;color:#8bb0f4">true</div>
<div class="row p" style="left:39.500px;top:176px;color:#8bb0f4">true</div>
<div class="row p" style="left:39.500px;top:220px;color:#8bb0f4">true</div>
</div>
<!-- ===== AI panel ===== -->
<div class="panel" style="left:2038px;top:84px;width:852px;height:1780px">
<div class="abs mono" style="left:40px;top:40px;width:771px;height:165px;border-radius:10px;background:#2b2c35;font-size:26px;line-height:36px;white-space:pre;color:#d8d9de;-webkit-text-stroke:0.6px;padding:37px 0 0 17px">        {<span class="n">1</span>, <span class="n">6</span>, <span class="n">2</span>, <span class="n">7</span>}));
    }
}</div>
<div class="abs" style="left:0;top:0;width:852px;height:88px;background:#1a1b1f"></div>
<svg class="abs" style="left:35px;top:31px" width="26" height="26" viewBox="0 0 26 26"><path d="M13 0.6v5.8M13 20.4v5M0.8 13h3M18.6 13h5.2M18.5 7.8l3.3-3.3M7.6 7.6L4.5 4.5M18.5 18.5l3.3 3.2" stroke="#fff" stroke-width="2.5" stroke-linecap="round" fill="none"/><path d="M14.3 11.7L2.6 23.2" stroke="#fff" stroke-width="3.2" stroke-linecap="round" fill="none"/></svg>
<span class="abs b" style="left:80px;top:24px;line-height:42px;font-size:28px;color:#fff;white-space:nowrap">AI 助手</span>
<div class="aip" style="top:222px">上述代码中，关键步骤在于对状态转移方程的理解，通过更<br>新<span class="ic">dp</span>数组的不同状态来计算最大利润。您可以根据需要<br>进一步完善和调试代码。</div>
<div class="abs b" style="left:572px;top:552px;width:240px;height:80px;border-radius:14px;background:#2c2d35;line-height:80px;text-align:center;color:#ececf0;font-size:26px;white-space:nowrap">帮我检查一下代码</div>
<div class="abs" style="left:40px;top:696px;width:48px;height:48px;border-radius:24px;background:#a582f0;box-shadow:0 0 0 2px #2a2438"></div>
<svg class="abs" style="left:49.500px;top:705.500px" width="29" height="29" viewBox="0 0 26 26"><path d="M13 0.6v5.8M13 20.4v5M0.8 13h3M18.6 13h5.2M18.5 7.8l3.3-3.3M7.6 7.6L4.5 4.5M18.5 18.5l3.3 3.2" stroke="#7a4fd3" stroke-width="2.6" stroke-linecap="round" fill="none"/><path d="M14.3 11.7L2.6 23.2" stroke="#391c8c" stroke-width="3.6" stroke-linecap="round" fill="none"/></svg>
<span class="abs b" style="left:100px;top:700px;line-height:43px;font-size:24px;color:#ececf0;white-space:nowrap">AI 助手</span>
<div class="aip" style="top:778px">以下是对您代码的检查和分析：</div>
<div class="aip" style="top:842px">这段代码的整体结构和逻辑是比较清晰的。</div>
<div class="aip" style="top:906px">优点：</div>
<div class="abs" style="left:65px;top:991px;width:8px;height:8px;border-radius:4px;background:#dfe0e5"></div>
<div class="aip" style="left:88px;top:970px">采用了动态规划的思想，通过定义二维数组<span class="ic">f</span>来存储不<br>同状态下的最大利润，思路是正确的。</div>
<div class="aip" style="top:1082px">可改进的点：</div>
<div class="abs" style="left:65px;top:1167px;width:8px;height:8px;border-radius:4px;background:#dfe0e5"></div>
<div class="aip" style="left:88px;top:1146px">代码的可读性可以进一步提高，比如添加更多的注释来解<br>释每个状态和状态转移方程的含义。</div>
<div class="aip" style="top:1258px">在功能方面，您可以通过增加更多的测试用例来确保代码在各<br>种情况下都能正确计算最大利润。</div>
<div class="aip" style="top:1370px">希望这些建议对您有所帮助！</div>
<div class="abtn" style="left:40px"><svg class="abs" style="left:11px;top:11px" width="26" height="26" viewBox="0 0 26 26"><path d="M3.2 11.2a10 10 0 0 1 19.2-1.6M22.8 14.8a10 10 0 0 1-19.2 1.6" fill="none" stroke="#e4e5ea" stroke-width="2.1"/><path d="M0.8 9.6l2.6 3.6 3.4-3.2z M25.2 16.4l-2.6-3.6-3.4 3.2z" fill="#e4e5ea"/></svg></div>
<div class="abs" style="left:112px;top:1446px;width:2px;height:18px;background:#25262c"></div>
<div class="abtn" style="left:138px"><svg class="abs" style="left:13px;top:13px" width="23" height="22" viewBox="0 0 23 22"><path d="M1.1 7.6v13.2" stroke="#e4e5ea" stroke-width="2.1" fill="none"/><path d="M4.7 20.1V8.6l6.8-8.2 3.3 2-1.7 5.7 8 .7-3.7 11.3z" stroke="#e4e5ea" stroke-width="2.1" fill="none" stroke-linejoin="miter"/></svg></div>
<div class="abtn" style="left:202px"><svg class="abs" style="left:12px;top:14px" width="23" height="22" viewBox="0 0 23 22"><g transform="rotate(180 11.5 11)"><path d="M1.1 7.6v13.2" stroke="#e4e5ea" stroke-width="2.1" fill="none"/><path d="M4.7 20.1V8.6l6.8-8.2 3.3 2-1.7 5.7 8 .7-3.7 11.3z" stroke="#e4e5ea" stroke-width="2.1" fill="none" stroke-linejoin="miter"/></g></svg></div>
<div class="sug" style="top:1524px">这段代码中状态转移方程的计算逻辑能再解释一下吗？<svg width="20" height="18" viewBox="0 0 20 18"><path d="M1 9h17.5M11.5 2l7 7-7 7" fill="none" stroke="#70727c" stroke-width="2" /></svg></div>
<div class="sug" style="top:1604px">需要一点思路提示<svg width="20" height="18" viewBox="0 0 20 18"><path d="M1 9h17.5M11.5 2l7 7-7 7" fill="none" stroke="#70727c" stroke-width="2" /></svg></div>
<div class="sug" style="top:1684px">给我一些代码提示吧<svg width="20" height="18" viewBox="0 0 20 18"><path d="M1 9h17.5M11.5 2l7 7-7 7" fill="none" stroke="#70727c" stroke-width="2" /></svg></div>
</div>
<!-- ===== floating button + user menu ===== -->
<div class="abs" style="left:2878px;top:92px;width:88px;height:94px;border-radius:13px/23px;background:linear-gradient(180deg,#99a3d6 0%,#a7a1cc 50%,#bd98a8 100%)"><div class="abs" style="left:3px;top:3px;right:3px;bottom:3px;border-radius:10px/20px;background:#121317"></div></div>
<div class="abs" style="left:2394px;top:84px;width:564px;height:552px;border-radius:18px;background:#33343d;border:2px solid #44454d;overflow:hidden;box-shadow:0 8px 30px rgba(0,0,0,.35)">
<div class="abs" style="left:0;top:0;right:0;height:148px;background:#25262c"></div>
<svg class="abs" style="left:32px;top:38px" width="72" height="72" viewBox="0 0 72 72"><circle cx="36" cy="36" r="36" fill="#d3934b"/><circle cx="36" cy="26" r="8" fill="#b67c3e"/><path d="M18 54a18 15 0 0 1 36 0z" fill="#2c1a06"/></svg>
<span class="abs b" style="left:137px;top:50px;line-height:48px;font-size:32px;color:#fff;white-space:nowrap;letter-spacing:1.3px">用户6759661917</span>
<span class="mi" style="top:175px">主题</span><span class="mv" style="top:175px">暗色</span><svg class="abs" style="right:50px;top:185px" width="12" height="18" viewBox="0 0 12 18"><path d="M2.600 3l6.200 6-6.200 6" fill="none" stroke="#8f919b" stroke-width="3.100"/></svg>
<span class="mi" style="top:235px">语言</span><span class="mv" style="top:235px">简体中文</span><svg class="abs" style="right:50px;top:245px" width="12" height="18" viewBox="0 0 12 18"><path d="M2.600 3l6.200 6-6.200 6" fill="none" stroke="#8f919b" stroke-width="3.100"/></svg>
<div class="abs" style="left:0;right:0;top:300px;height:2px;background:#42434c"></div>
<span class="mi" style="top:329px">主页</span><svg class="abs" style="right:44px;top:337px" width="22" height="22" viewBox="0 0 22 22"><path d="M2 16v4h18v-4" fill="none" stroke="#6f717b" stroke-width="2"/><path d="M3 14c.5-5 4.500-8.500 11-8.500h5" fill="none" stroke="#6f717b" stroke-width="2"/><path d="M13.500 0.800l5.500 4.700-5.500 4.700" fill="none" stroke="#6f717b" stroke-width="2"/></svg>
<span class="mi" style="top:389px">工作台</span><svg class="abs" style="right:44px;top:397px" width="22" height="22" viewBox="0 0 22 22"><path d="M2 16v4h18v-4" fill="none" stroke="#6f717b" stroke-width="2"/><path d="M3 14c.5-5 4.500-8.500 11-8.500h5" fill="none" stroke="#6f717b" stroke-width="2"/><path d="M13.500 0.800l5.500 4.700-5.500 4.700" fill="none" stroke="#6f717b" stroke-width="2"/></svg>
<div class="abs" style="left:0;right:0;top:454px;height:2px;background:#42434c"></div>
<span class="mi" style="top:483px">退出登录</span>
</div>
<div class="abs" style="left:2545px;top:1766px;line-height:40px;font-size:24.8px;color:#ececec;white-space:nowrap;text-shadow:0 0 3px rgba(0,0,0,.6)">掘金技术社区 @ 用户84510760360</div>
</div>
</body></html>
